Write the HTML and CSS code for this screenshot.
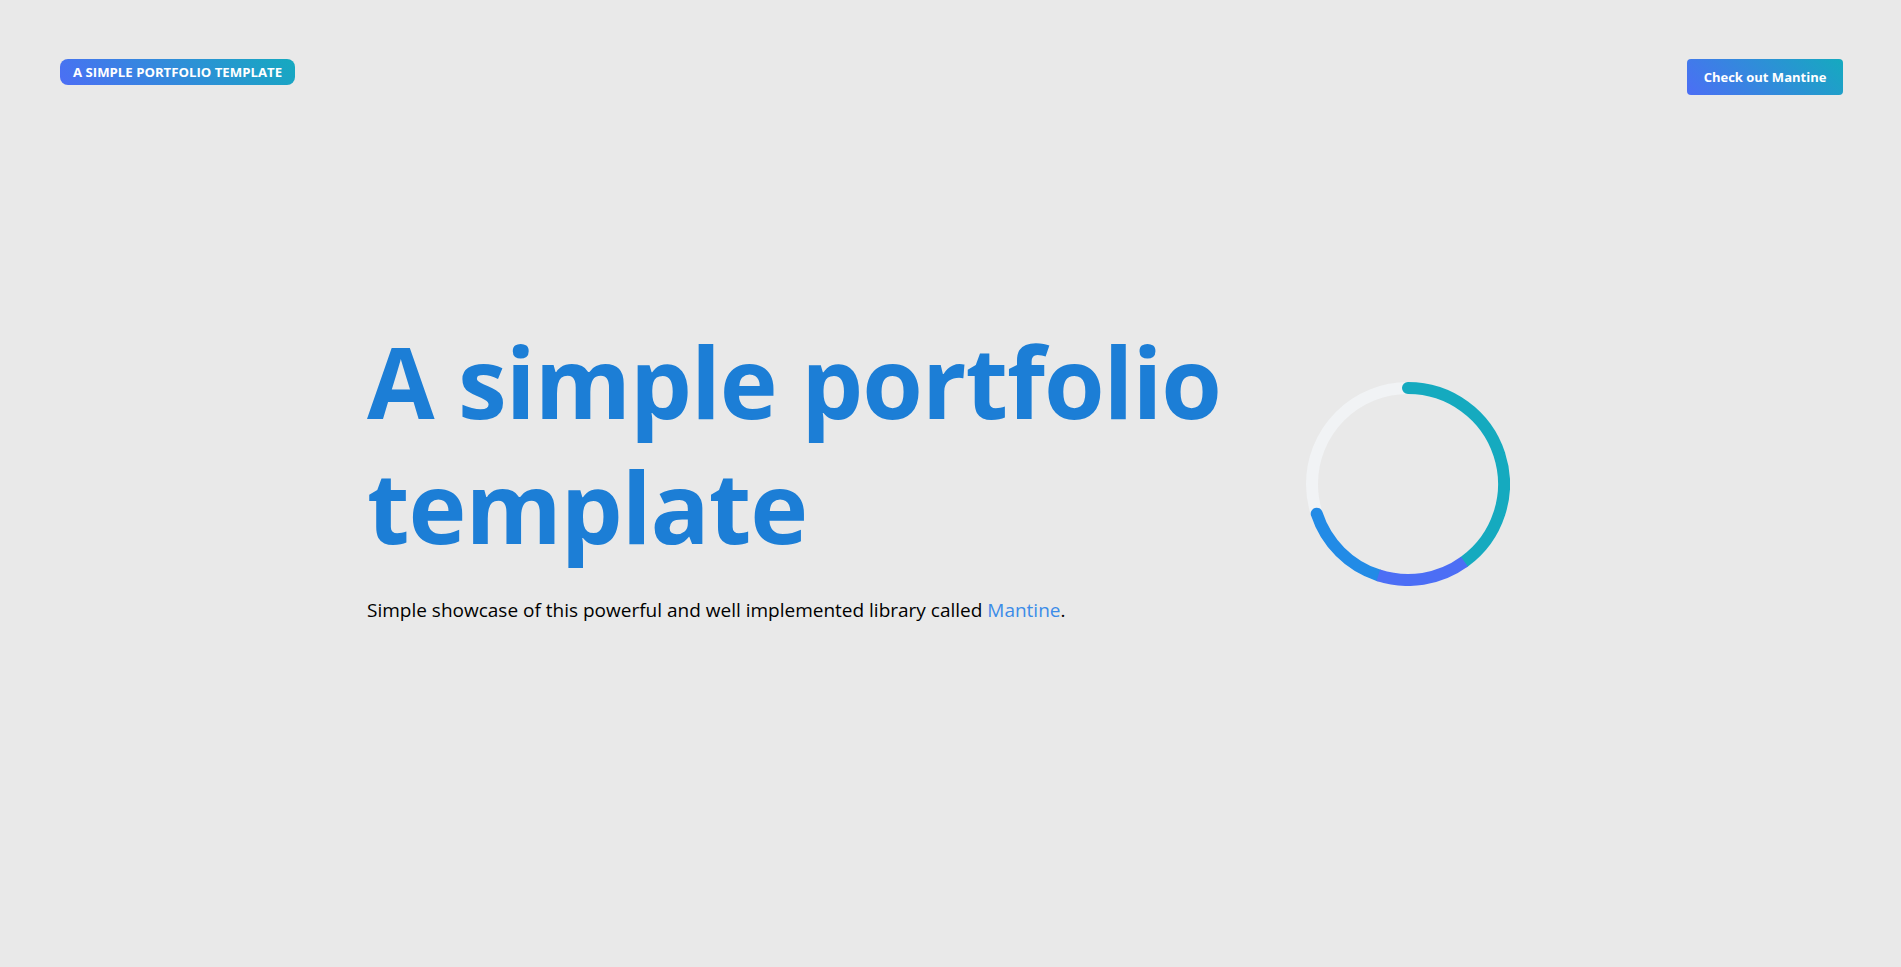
FILE: index.html
```html
<!DOCTYPE html>
<html lang="en">
<head>
<meta charset="utf-8">
<title>A simple portfolio template</title>
<link rel="stylesheet" href="styles.css">
</head>
<body>
<div class="page">
  <header class="header">
    <span class="badge">A simple portfolio template</span>
    <a class="button" href="#">Check out Mantine</a>
  </header>
  <main class="hero">
    <div class="hero-text">
      <h1 class="title">A simple portfolio template</h1>
      <p class="subtitle">Simple showcase of this powerful and well implemented library called <a class="link" href="#">Mantine</a>.</p>
    </div>
    <svg class="ring" width="204" height="204" viewBox="0 0 204 204">
      <circle cx="102" cy="102" r="96" fill="none" stroke="#f1f3f5" stroke-width="12"/>
      <path d="M102 6 A96 96 0 0 1 158.43 179.67" fill="none" stroke="#15aabf" stroke-width="12" stroke-linecap="round"/>
      <path d="M72.33 193.30 A96 96 0 0 1 10.70 131.67" fill="none" stroke="#228be6" stroke-width="12" stroke-linecap="round"/>
      <path d="M158.43 179.67 A96 96 0 0 1 72.33 193.30" fill="none" stroke="#4c6ef5" stroke-width="12" stroke-linecap="butt"/>
    </svg>
  </main>
</div>
</body>
</html>
```

FILE: styles.css
```css
html, body {
  margin: 0;
  padding: 0;
}

body {
  background: #e9e9e9;
  font-family: "Open Sans", "Noto Sans", "Liberation Sans", sans-serif;
  color: #000;
}

.page {
  min-height: 100vh;
}

.header {
  display: flex;
  justify-content: space-between;
  align-items: flex-start;
  padding: 59px 58px 0 60px;
}

.badge {
  display: inline-flex;
  align-items: center;
  height: 26px;
  padding: 0 13px;
  border-radius: 8px;
  background: linear-gradient(45deg, #4c6ef5, #15aabf);
  color: #fff;
  font-size: 13.2px;
  font-weight: 700;
  text-transform: uppercase;
  box-sizing: border-box;
}

.button {
  display: inline-flex;
  align-items: center;
  justify-content: center;
  height: 36px;
  width: 156px;
  padding-bottom: 1px;
  border-radius: 4px;
  background: linear-gradient(45deg, #4c6ef5, #15aabf);
  color: #fff;
  font-size: 13px;
  font-weight: 700;
  text-decoration: none;
  box-sizing: border-box;
}

.hero {
  display: flex;
  align-items: flex-start;
  gap: 40px;
  padding: 0 391px 0 367px;
  margin-top: 224px;
}

.hero-text {
  flex: 1;
  display: flex;
  flex-direction: column;
}

.title {
  margin: 0;
  font-size: 98px;
  line-height: 125px;
  font-weight: 700;
  color: #1c7ed6;
  letter-spacing: -1px;
}

.subtitle {
  margin: 27px 0 0;
  font-size: 19px;
  line-height: 28px;
  color: #000;
}

.link {
  color: #3c8ce8;
  text-decoration: none;
}

.ring {
  display: block;
  flex: none;
  margin-top: 63px;
}
```
